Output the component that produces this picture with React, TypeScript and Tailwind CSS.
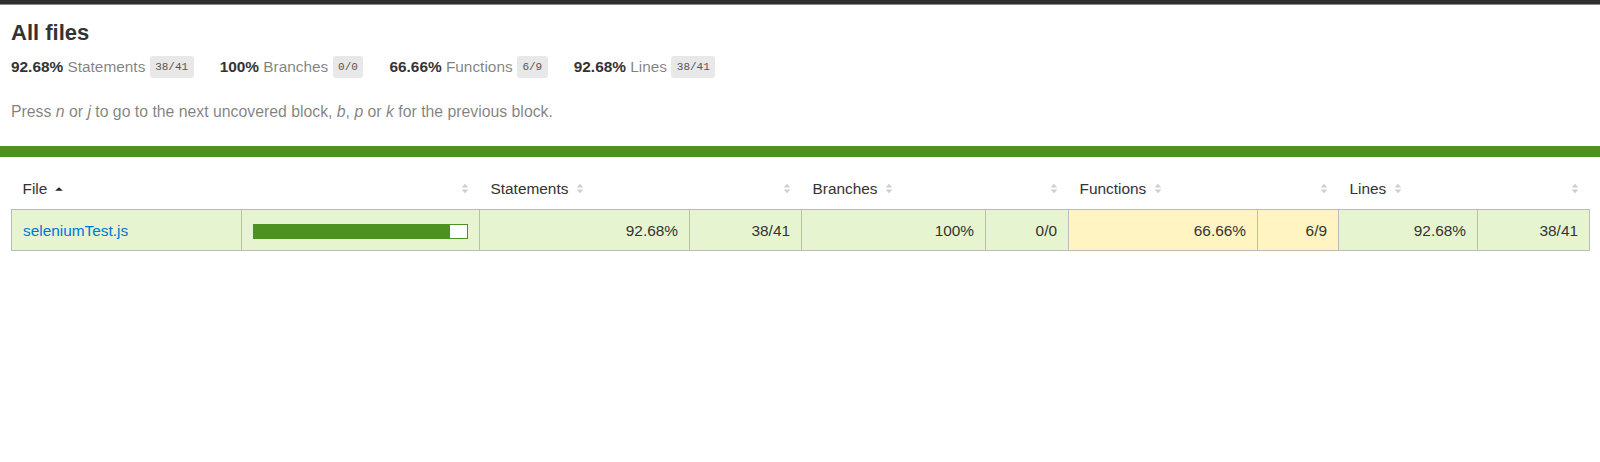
import React from 'react'

type Metric = { pct: string; covered: number; total: number; level: 'high' | 'medium' }

const summary = [
  { label: 'Statements', pct: '92.68%', frac: '38/41' },
  { label: 'Branches', pct: '100%', frac: '0/0' },
  { label: 'Functions', pct: '66.66%', frac: '6/9' },
  { label: 'Lines', pct: '92.68%', frac: '38/41' },
]

const files: {
  name: string
  fill: number
  metrics: Metric[]
}[] = [
  {
    name: 'seleniumTest.js',
    fill: 92,
    metrics: [
      { pct: '92.68%', covered: 38, total: 41, level: 'high' },
      { pct: '100%', covered: 0, total: 0, level: 'high' },
      { pct: '66.66%', covered: 6, total: 9, level: 'medium' },
      { pct: '92.68%', covered: 38, total: 41, level: 'high' },
    ],
  },
]

function Sorter({ sorted = false, className = '' }: { sorted?: boolean; className?: string }) {
  return (
    <svg
      width="8"
      height="11"
      viewBox="0 0 7 10"
      className={`inline-block align-baseline ${className}`}
    >
      {sorted ? (
        <polygon points="0,7 3.5,3.8 7,7" fill="#222" />
      ) : (
        <>
          <polygon points="0.5,4 3.5,0.6 6.5,4" fill="#cfcfcf" />
          <polygon points="0.5,6 3.5,9.4 6.5,6" fill="#cfcfcf" />
        </>
      )}
    </svg>
  )
}

export default function App() {
  return (
    <div className="min-h-[462px] bg-white text-[15.4px] text-[#333] font-['Liberation_Sans',Arial,sans-serif]">
      {/* top edge */}
      <div className="h-[5px] bg-[#2f2f2f] border-b border-[#8a8a8a]" />

      {/* header */}
      <div className="px-[11px] pt-[15px] pb-[24px]">
        <h1 className="text-[22px] leading-[26px] font-bold">All files</h1>

        <div className="flex pt-[10px] pb-[11px]">
          {summary.map((s) => (
            <div key={s.label} className="flex h-[22px] items-center pr-[26px] whitespace-pre">
              <span className="font-bold">{s.pct} </span>
              <span className="text-black/50">{s.label} </span>
              <span className="rounded-[3px] bg-[#e8e8e8] px-[5.5px] py-[4.4px] font-['Liberation_Mono',monospace] text-[11px] leading-[13px] text-[#555]">
                {s.frac}
              </span>
            </div>
          ))}
        </div>

        <p className="mt-[13px] text-[15.8px] leading-[20px] text-black/50">
          Press <em>n</em> or <em>j</em> to go to the next uncovered block, <em>b</em>,{' '}
          <em>p</em> or <em>k</em> for the previous block.
        </p>
      </div>

      {/* status line */}
      <div className="h-[11px] bg-[#4d9221]" />

      {/* summary table */}
      <div className="p-[11px]">
        <table className="w-full table-fixed border-collapse">
          <colgroup>
            <col className="w-[230px]" />
            <col className="w-[238px]" />
            <col className="w-[210px]" />
            <col className="w-[112px]" />
            <col className="w-[184px]" />
            <col className="w-[83px]" />
            <col className="w-[189px]" />
            <col className="w-[81px]" />
            <col className="w-[139px]" />
            <col className="w-[112px]" />
          </colgroup>
          <thead>
            <tr className="leading-[19px]">
              <th className="p-[11px] text-left font-normal whitespace-nowrap">
                File
                <Sorter sorted className="ml-[0.5em]" />
              </th>
              <th className="p-[11px] text-right font-normal">
                <Sorter />
              </th>
              {['Statements', 'Branches', 'Functions', 'Lines'].map((label) => (
                <React.Fragment key={label}>
                  <th className="p-[11px] text-left font-normal whitespace-nowrap">
                    {label}
                    <Sorter className="ml-[0.5em]" />
                  </th>
                  <th className="p-[11px] text-right font-normal">
                    <Sorter />
                  </th>
                </React.Fragment>
              ))}
            </tr>
          </thead>
          <tbody className="border border-[#bbb]">
            {files.map((f) => (
              <tr key={f.name} className="border-b border-[#bbb] leading-[19px]">
                <td className="border-r border-[#bbb] bg-[#e6f5d0] px-[11px] pt-[11px] pb-[10px] whitespace-nowrap">
                  <a href="#" className="text-[#0074d9]">
                    {f.name}
                  </a>
                </td>
                <td className="border-r border-[#bbb] bg-[#e6f5d0] px-[11px] pt-[11px] pb-[10px]">
                  <div className="mt-[1px] flex h-[15px] border border-[#4d9221]">
                    <div className="bg-[#4d9221]" style={{ width: `${f.fill}%` }} />
                    <div className="flex-1 bg-white" />
                  </div>
                </td>
                {f.metrics.map((m, i) => {
                  const bg = m.level === 'high' ? 'bg-[#e6f5d0]' : 'bg-[#fff4c2]'
                  return (
                    <React.Fragment key={i}>
                      <td className={`border-r border-[#bbb] ${bg} px-[11px] pt-[11px] pb-[10px] text-right`}>
                        {m.pct}
                      </td>
                      <td className={`border-r border-[#bbb] ${bg} px-[11px] pt-[11px] pb-[10px] text-right`}>
                        {m.covered}/{m.total}
                      </td>
                    </React.Fragment>
                  )
                })}
              </tr>
            ))}
          </tbody>
        </table>
      </div>
    </div>
  )
}
